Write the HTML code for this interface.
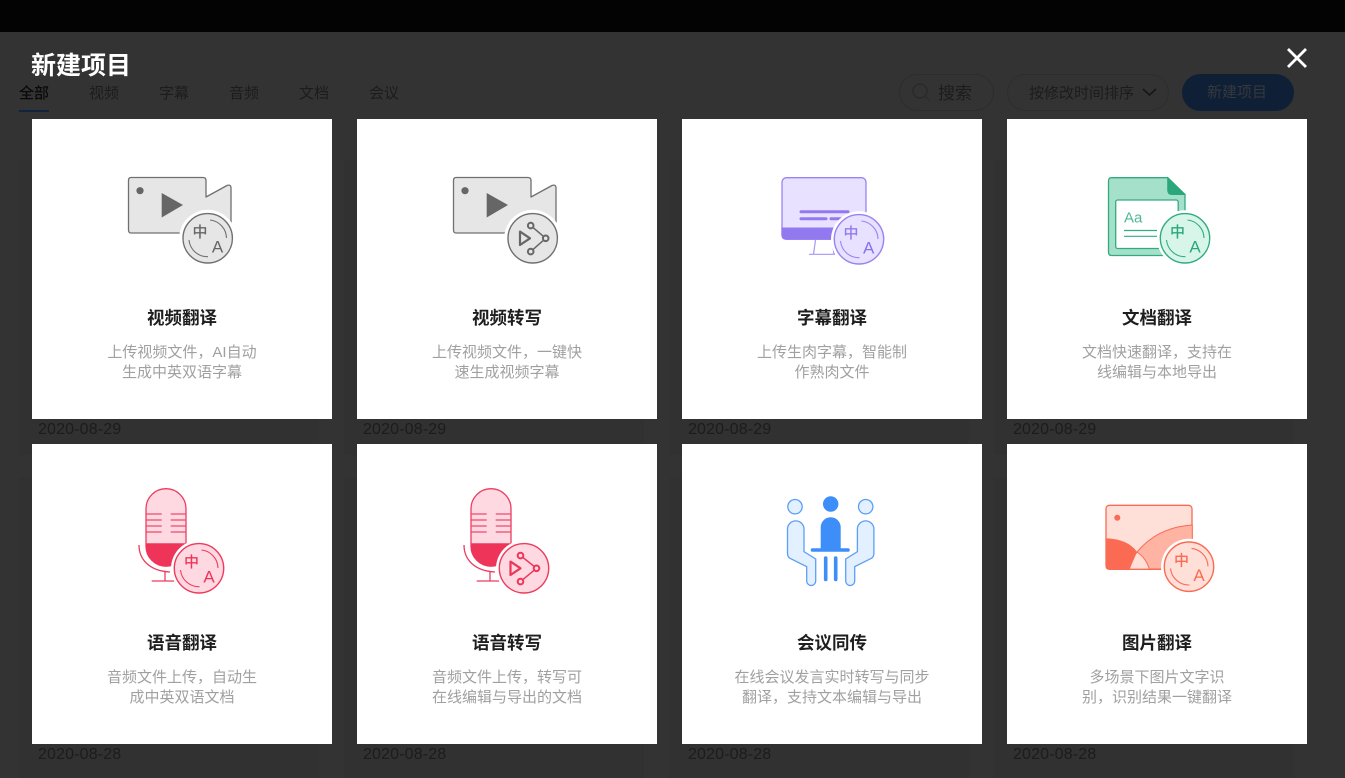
<!DOCTYPE html>
<html lang="zh">
<head>
<meta charset="utf-8">
<title>新建项目</title>
<style>
html,body{margin:0;padding:0;width:1345px;height:778px;overflow:hidden;background:#333;}
body{position:relative;font-family:"Liberation Sans","Noto Sans CJK SC",sans-serif;}
.a{position:absolute;white-space:nowrap;}
.top{left:0;top:0;width:1345px;height:32px;background:#030303;}
.bg{position:absolute;width:300px;background:#313131;}
.h{left:31px;top:48px;font-size:25px;line-height:36px;font-weight:700;color:#fff;}
.tab{top:84px;font-size:15px;line-height:20px;color:#1c1c1c;}
.pill{top:74px;height:37px;box-sizing:border-box;border:1px solid #2d2d2d;border-radius:19px;}
.date{font-size:16px;line-height:20px;color:#1c1c1c;letter-spacing:.15px;}
.card{position:absolute;width:300px;height:300px;background:#fff;text-align:center;}
.card b{position:absolute;left:0;right:0;top:187px;font-size:17.5px;line-height:24px;color:#1e1e1e;font-weight:700;}
.card p{position:absolute;left:0;right:0;top:224px;margin:0;font-size:15px;line-height:20px;color:#a0a0a0;}
svg.ic{position:absolute;left:0;top:0;}
svg text.z{font-family:"Noto Sans CJK SC",sans-serif;font-size:15px;font-weight:500;text-anchor:middle;}
svg text.l{font-family:"Liberation Sans",sans-serif;font-size:17px;text-anchor:middle;}
</style>
</head>
<body>
<div class="a top"></div>
<div class="bg" style="left:19px;top:160px;height:295px"></div>
<div class="bg" style="left:344px;top:160px;height:295px"></div>
<div class="bg" style="left:669px;top:160px;height:295px"></div>
<div class="bg" style="left:994px;top:160px;height:295px"></div>
<div class="bg" style="left:19px;top:478px;height:300px"></div>
<div class="bg" style="left:344px;top:478px;height:300px"></div>
<div class="bg" style="left:669px;top:478px;height:300px"></div>
<div class="bg" style="left:994px;top:478px;height:300px"></div>

<div class="a h">新建项目</div>
<div class="a tab" style="left:19px;color:#0a0a0a;font-weight:500;">全部</div>
<div class="a" style="left:19px;top:110px;width:30px;height:2px;background:#10233f;"></div>
<div class="a tab" style="left:89px">视频</div>
<div class="a tab" style="left:159px">字幕</div>
<div class="a tab" style="left:229px">音频</div>
<div class="a tab" style="left:299px">文档</div>
<div class="a tab" style="left:369px">会议</div>

<div class="a pill" style="left:899px;width:95px;"></div>
<div class="a" style="left:938px;top:82px;font-size:17px;line-height:24px;color:#1c1c1c;">搜索</div>
<div class="a pill" style="left:1007px;width:162px;"></div>
<div class="a" style="left:1029px;top:84px;font-size:15px;line-height:20px;color:#1c1c1c;">按修改时间排序</div>
<div class="a" style="left:1182px;top:74px;width:112px;height:37px;border-radius:19px;background:#0f1f36;"></div>
<div class="a" style="left:1207px;top:83px;font-size:15px;line-height:20px;color:#35383d;">新建项目</div>

<div class="a date" style="left:38px;top:420px">2020-08-29</div>
<div class="a date" style="left:363px;top:420px">2020-08-29</div>
<div class="a date" style="left:688px;top:420px">2020-08-29</div>
<div class="a date" style="left:1013px;top:420px">2020-08-29</div>
<div class="a date" style="left:38px;top:745px">2020-08-28</div>
<div class="a date" style="left:363px;top:745px">2020-08-28</div>
<div class="a date" style="left:688px;top:745px">2020-08-28</div>
<div class="a date" style="left:1013px;top:745px">2020-08-28</div>

<div class="card" style="left:32px;top:119px"><b>视频翻译</b><p>上传视频文件，AI自动<br>生成中英双语字幕</p></div>
<div class="card" style="left:357px;top:119px"><b>视频转写</b><p>上传视频文件，一键快<br>速生成视频字幕</p></div>
<div class="card" style="left:682px;top:119px"><b>字幕翻译</b><p>上传生肉字幕，智能制<br>作熟肉文件</p></div>
<div class="card" style="left:1007px;top:119px"><b>文档翻译</b><p>文档快速翻译，支持在<br>线编辑与本地导出</p></div>
<div class="card" style="left:32px;top:444px"><b>语音翻译</b><p>音频文件上传，自动生<br>成中英双语文档</p></div>
<div class="card" style="left:357px;top:444px"><b>语音转写</b><p>音频文件上传，转写可<br>在线编辑与导出的文档</p></div>
<div class="card" style="left:682px;top:444px"><b>会议同传</b><p>在线会议发言实时转写与同步<br>翻译，支持文本编辑与导出</p></div>
<div class="card" style="left:1007px;top:444px"><b>图片翻译</b><p>多场景下图片文字识<br>别，识别结果一键翻译</p></div>

<svg class="ic" width="1345" height="778" viewBox="0 0 1345 778" fill="none">
<!-- close -->
<path d="M1288 49 L1306 67 M1306 49 L1288 67" stroke="#fff" stroke-width="2.8"/>
<!-- search + chevron -->
<circle cx="920" cy="91" r="7" stroke="#2a2a2a" stroke-width="1.5"/>
<path d="M925 96 L929 100" stroke="#2a2a2a" stroke-width="1.5"/>
<path d="M1143 89 L1149.5 95 L1156 89" stroke="#161616" stroke-width="1.6"/>

<!-- 1 video translate -->
<path d="M131 177.5 H203 Q206 177.5 206 180.5 V197 L227 185.5 Q231 184 231 188 V232 Q231 233 228 233 H131 Q128.5 233 128.5 230 V180.5 Q128.5 177.5 131 177.5 Z" fill="#e6e6e6" stroke="#707070" stroke-width="1.3" stroke-linejoin="round"/>
<circle cx="140" cy="190.7" r="3.6" fill="#666"/>
<path d="M161.7 193 L183 205 L161.7 217.5 Z" fill="#666"/>
<circle cx="207.7" cy="238.3" r="28.5" fill="#fff"/>
<circle cx="207.7" cy="238.3" r="24.7" fill="#e6e6e6" stroke="#707070" stroke-width="1.4"/>
<path d="M210 220 A18.5 18.5 0 0 1 226.5 238 M189 240 A18.5 18.5 0 0 0 208 256.7" stroke="#707070" stroke-width="1.1"/>
<text class="z" x="200" y="237" fill="#666">中</text>
<text class="l" x="217.5" y="252.5" fill="#666">A</text>

<!-- 2 video transcribe -->
<path d="M456 177.5 H528 Q531 177.5 531 180.5 V197 L552 185.5 Q556 184 556 188 V232 Q556 233 553 233 H456 Q453.5 233 453.5 230 V180.5 Q453.5 177.5 456 177.5 Z" fill="#e6e6e6" stroke="#707070" stroke-width="1.3" stroke-linejoin="round"/>
<circle cx="465" cy="190.7" r="3.6" fill="#666"/>
<path d="M486.7 193 L508 205 L486.7 217.5 Z" fill="#666"/>
<circle cx="532.7" cy="238.3" r="28.5" fill="#fff"/>
<circle cx="532.7" cy="238.3" r="24.7" fill="#e6e6e6" stroke="#707070" stroke-width="1.4"/>
<path d="M520 231.6 L530 238.3 L520 245 Z" stroke="#666" stroke-width="2.2" stroke-linejoin="round"/>
<path d="M530.7 225.6 L545.7 238.3 L530.7 251.6" stroke="#666" stroke-width="1.5"/>
<circle cx="530.7" cy="225.6" r="2.8" fill="#e6e6e6" stroke="#666" stroke-width="2"/>
<circle cx="545.7" cy="238.3" r="2.8" fill="#e6e6e6" stroke="#666" stroke-width="2"/>
<circle cx="530.7" cy="251.6" r="2.8" fill="#e6e6e6" stroke="#666" stroke-width="2"/>

<!-- 3 subtitle -->
<rect x="782" y="177.7" width="84" height="61.5" rx="4.5" fill="#e8e1ff" stroke="#9a82f3" stroke-width="1.3"/>
<path d="M781.4 227.5 H866.6 V235 Q866.6 239.8 862 239.8 H786 Q781.4 239.8 781.4 235 Z" fill="#9379f0"/>
<path d="M801 211.7 H848 M801 218.7 H826 M831 218.7 H855" stroke="#9379f0" stroke-width="3" stroke-linecap="round"/>
<path d="M815.5 240 L813.5 254.3 M809 254.3 H835 M832 240 L834 254" stroke="#a995f5" stroke-width="1.2" fill="none"/>
<circle cx="859" cy="239.3" r="28" fill="#fff"/>
<circle cx="859" cy="239.3" r="24.7" fill="#e8e1ff" stroke="#9a82f3" stroke-width="1.4"/>
<path d="M861.5 221 A18.5 18.5 0 0 1 878 239 M840.5 241 A18.5 18.5 0 0 0 859.5 257.7" stroke="#9a82f3" stroke-width="1.1"/>
<text class="z" x="851" y="238" fill="#9379f0">中</text>
<text class="l" x="868.7" y="253.5" fill="#8a6ff0">A</text>

<!-- 4 doc -->
<path d="M1111.5 177.7 H1167.7 L1185 194.5 V252 Q1185 255.5 1182 255.5 H1111.5 Q1108.5 255.5 1108.5 252 V181 Q1108.5 177.7 1111.5 177.7 Z" fill="#a5e0cb" stroke="#33ab82" stroke-width="1.3"/>
<path d="M1167.7 177.7 L1185 194.5 H1172 Q1167.7 194.5 1167.7 190 Z" fill="#2aa87c" stroke="#2aa87c" stroke-width="1"/>
<rect x="1115.7" y="200" width="62.5" height="48.5" rx="2" fill="#fff" stroke="#33ab82" stroke-width="1.3"/>
<text x="1124" y="222.3" fill="#4fb794" style="font-family:'Liberation Sans',sans-serif;font-size:15px">Aa</text>
<path d="M1124 230.5 H1157 M1124 236.3 H1157" stroke="#33ab82" stroke-width="1.2"/>
<circle cx="1185" cy="238.3" r="28" fill="#fff"/>
<circle cx="1185" cy="238.3" r="24.7" fill="#d8f5ea" stroke="#33ab82" stroke-width="1.4"/>
<path d="M1187.5 220 A18.5 18.5 0 0 1 1204 238 M1166.5 240 A18.5 18.5 0 0 0 1185.5 256.7" stroke="#33ab82" stroke-width="1.1"/>
<text class="z" x="1177.5" y="237" fill="#2aa87c">中</text>
<text class="l" x="1195" y="252.5" fill="#2aa87c">A</text>

<!-- 5 mic translate -->
<path d="M139 545 C139 560 150 571 170 572" stroke="#ee3b5e" stroke-width="1.3"/>
<path d="M165 572 V581 M151.7 581 H178" stroke="#ee3b5e" stroke-width="1.3"/>
<rect x="146" y="488.7" width="40" height="77.5" rx="20" fill="#ffd9e2" stroke="#ee3b5e" stroke-width="1.3"/>
<path d="M146 543.3 H186 V546 A20 20 0 0 1 146 546 Z" fill="#ee3559"/>
<path d="M146 514 H161.7 M146 520 H161.7 M146 526 H161.7 M146 532 H161.7 M170.7 514 H186 M170.7 520 H186 M170.7 526 H186 M170.7 532 H186" stroke="#ee4a6b" stroke-width="1.2"/>
<circle cx="199" cy="568.3" r="28" fill="#fff"/>
<circle cx="199" cy="568.3" r="24.7" fill="#ffd9e2" stroke="#ee3b5e" stroke-width="1.4"/>
<path d="M201.5 550 A18.5 18.5 0 0 1 218 568 M180.5 570 A18.5 18.5 0 0 0 199.5 586.7" stroke="#ee3b5e" stroke-width="1.1"/>
<text class="z" x="191.5" y="567" fill="#ee3559">中</text>
<text class="l" x="209" y="582.5" fill="#ee3559">A</text>

<!-- 6 mic transcribe -->
<path d="M464 545 C464 560 475 571 495 572" stroke="#ee3b5e" stroke-width="1.3"/>
<path d="M490 572 V581 M476.7 581 H503" stroke="#ee3b5e" stroke-width="1.3"/>
<rect x="471" y="488.7" width="40" height="77.5" rx="20" fill="#ffd9e2" stroke="#ee3b5e" stroke-width="1.3"/>
<path d="M471 543.3 H511 V546 A20 20 0 0 1 471 546 Z" fill="#ee3559"/>
<path d="M471 514 H486.7 M471 520 H486.7 M471 526 H486.7 M471 532 H486.7 M495.7 514 H511 M495.7 520 H511 M495.7 526 H511 M495.7 532 H511" stroke="#ee4a6b" stroke-width="1.2"/>
<circle cx="524" cy="568.3" r="28" fill="#fff"/>
<circle cx="524" cy="568.3" r="24.7" fill="#ffd9e2" stroke="#ee3b5e" stroke-width="1.4"/>
<path d="M510.5 561.6 L520.5 568.3 L510.5 575 Z" stroke="#ee3559" stroke-width="2.2" stroke-linejoin="round"/>
<path d="M520.5 555.6 L536.5 568.3 L520.5 581.6" stroke="#ee3559" stroke-width="1.5"/>
<circle cx="520.5" cy="555.6" r="2.8" fill="#ffd9e2" stroke="#ee3559" stroke-width="2"/>
<circle cx="536.5" cy="568.3" r="2.8" fill="#ffd9e2" stroke="#ee3559" stroke-width="2"/>
<circle cx="520.5" cy="581.6" r="2.8" fill="#ffd9e2" stroke="#ee3559" stroke-width="2"/>

<!-- 7 meeting -->
<circle cx="830.7" cy="504" r="7.7" fill="#3d8ef8"/>
<circle cx="795" cy="506.7" r="7.2" fill="#e3f0ff" stroke="#5b9ff7" stroke-width="1.3"/>
<circle cx="865.7" cy="506.7" r="7.2" fill="#e3f0ff" stroke="#5b9ff7" stroke-width="1.3"/>
<path d="M787.5 528.3 A8.3 8.3 0 0 1 804 528.3 V551.7 L815.7 559 V581 A4.5 4.5 0 0 1 806.7 581 V566.7 L790 558.3 Q787.5 557 787.5 553 Z" fill="#e3f0ff" stroke="#5b9ff7" stroke-width="1.3"/>
<path d="M873.9 528.3 A8.3 8.3 0 0 0 857.4 528.3 V551.7 L845.7 559 V581 A4.5 4.5 0 0 0 854.7 581 V566.7 L871.4 558.3 Q873.9 557 873.9 553 Z" fill="#e3f0ff" stroke="#5b9ff7" stroke-width="1.3"/>
<path d="M820.7 549 V527.3 A10 10 0 0 1 840.7 527.3 V549 Z" fill="#3d8ef8"/>
<path d="M812.5 550 H848" stroke="#3d8ef8" stroke-width="3.6" stroke-linecap="round"/>
<path d="M825.7 558 V579.5 M835.7 558 V579.5" stroke="#3d8ef8" stroke-width="3.6" stroke-linecap="round"/>

<!-- 8 image -->
<rect x="1106" y="505.3" width="86" height="64" rx="3.5" fill="#ffe0d9" stroke="#fb6a52" stroke-width="1.3"/>
<circle cx="1117.3" cy="517.7" r="3" fill="#fb6a52"/>
<path d="M1105.5 538.3 Q1128 539 1137 552 L1129.3 569.7 H1109 Q1105.5 569.7 1105.5 566 Z" fill="#fb6a52"/>
<path d="M1137 552 Q1158 527 1192.3 525 V569 H1149.3 Q1146 558 1137 552 Z" fill="#ffb3a3" stroke="#fb6a52" stroke-width="1"/>
<path d="M1129.3 569.3 Q1132 558 1137 552" stroke="#fb6a52" stroke-width="1"/>
<circle cx="1189" cy="566.7" r="28" fill="#fff"/>
<circle cx="1189" cy="566.7" r="24.7" fill="#ffe0d9" stroke="#fb6a52" stroke-width="1.4"/>
<path d="M1191.5 548.4 A18.5 18.5 0 0 1 1208 566.4 M1170.5 568.4 A18.5 18.5 0 0 0 1189.5 585" stroke="#fb6a52" stroke-width="1.1"/>
<text class="z" x="1181.5" y="565.4" fill="#fb6a52">中</text>
<text class="l" x="1199" y="581" fill="#fb6a52">A</text>
</svg>
</body>
</html>
